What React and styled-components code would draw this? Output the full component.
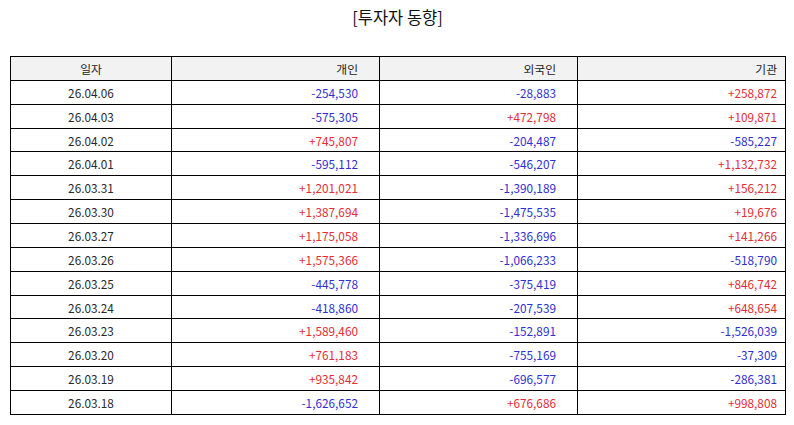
import styled, { createGlobalStyle } from 'styled-components';

const rows = [
  ['26.04.06', '-254,530', '-28,883', '+258,872'],
  ['26.04.03', '-575,305', '+472,798', '+109,871'],
  ['26.04.02', '+745,807', '-204,487', '-585,227'],
  ['26.04.01', '-595,112', '-546,207', '+1,132,732'],
  ['26.03.31', '+1,201,021', '-1,390,189', '+156,212'],
  ['26.03.30', '+1,387,694', '-1,475,535', '+19,676'],
  ['26.03.27', '+1,175,058', '-1,336,696', '+141,266'],
  ['26.03.26', '+1,575,366', '-1,066,233', '-518,790'],
  ['26.03.25', '-445,778', '-375,419', '+846,742'],
  ['26.03.24', '-418,860', '-207,539', '+648,654'],
  ['26.03.23', '+1,589,460', '-152,891', '-1,526,039'],
  ['26.03.20', '+761,183', '-755,169', '-37,309'],
  ['26.03.19', '+935,842', '-696,577', '-286,381'],
  ['26.03.18', '-1,626,652', '+676,686', '+998,808'],
];

const GlobalStyle = createGlobalStyle`
  body {
    margin: 0;
    background: #ffffff;
    font-family: "Noto Sans CJK KR", "Noto Sans", sans-serif;
    color: #222;
  }
`;

const Page = styled.div`
  width: 794px;
  padding: 0 9px 0 10px;
  box-sizing: border-box;
`;

const Title = styled.h2`
  margin: 0;
  height: 56px;
  padding-top: 5px;
  box-sizing: border-box;
  text-align: center;
  font-size: 16.5px;
  font-weight: 400;
  line-height: 24px;
  color: #111;
`;

const Table = styled.table`
  width: 775px;
  border-collapse: collapse;
  table-layout: fixed;
  font-size: 11.8px;
`;

const Row = styled.tr`
  height: 23.87px;
`;

const Head = styled.th`
  background: #f2f2f2;
  font-weight: 400;
  color: #222;
  border: 1px solid #000;
  padding: 0 ${p => p.$pad || 0}px 0 0;
  text-align: ${p => p.$align || 'right'};
`;

const Cell = styled.td`
  border: 1px solid #000;
  padding: 0 ${p => p.$pad || 0}px 0 0;
  text-align: ${p => p.$align || 'right'};
  color: ${p => (p.$tone === 'up' ? '#e42d35' : p.$tone === 'down' ? '#2f2fd2' : '#2a2a2a')};
`;

const tone = v => (v.startsWith('+') ? 'up' : 'down');

const cols = [
  { label: '일자', width: 161, align: 'center', pad: 0 },
  { label: '개인', width: 208, pad: 21 },
  { label: '외국인', width: 198, pad: 21 },
  { label: '기관', width: 208, pad: 8 },
];

const App = () => (
  <Page>
    <GlobalStyle />
    <Title>[투자자 동향]</Title>
    <Table>
      <colgroup>
        {cols.map(c => (
          <col key={c.label} style={{ width: c.width }} />
        ))}
      </colgroup>
      <thead>
        <Row>
          {cols.map(c => (
            <Head key={c.label} $align={c.align} $pad={c.pad}>
              {c.label}
            </Head>
          ))}
        </Row>
      </thead>
      <tbody>
        {rows.map(r => (
          <Row key={r[0]}>
            <Cell $align="center">{r[0]}</Cell>
            {r.slice(1).map((v, i) => (
              <Cell key={i} $pad={cols[i + 1].pad} $tone={tone(v)}>
                {v}
              </Cell>
            ))}
          </Row>
        ))}
      </tbody>
    </Table>
  </Page>
);

export default App;
